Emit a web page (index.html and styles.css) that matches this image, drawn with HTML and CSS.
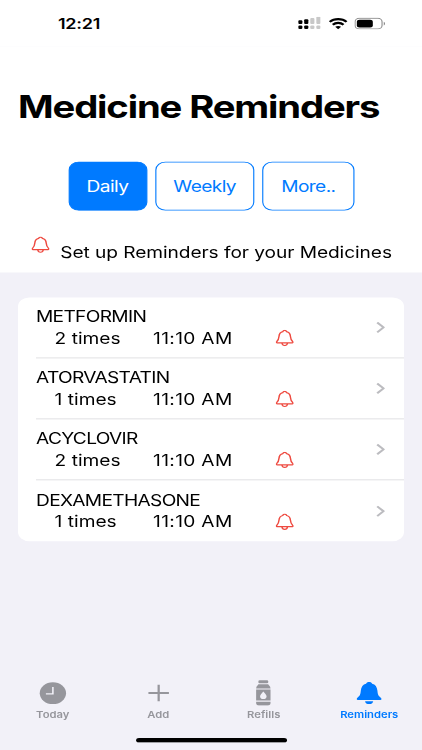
FILE: index.html
```
<!DOCTYPE html>
<html lang="en">
<head>
    <meta charset="UTF-8">
    <meta name="viewport" content="width=device-width, initial-scale=1.0">
    <title>Medicine Reminders</title>
    <link rel="stylesheet" href="styles.css">
</head>
<body>
    <svg class="symbols" width="0" height="0">
        <symbol id="bell" viewBox="0 0 16 18">
            <path d="M1.2 14.2C.3 14.2.4 13.2 1 12.7C2.5 11.2 2.7 10 2.9 7.3C3.1 4.3 4.3 2.6 6.3 2.1C6.5 1.2 7.1.7 8 .7C8.9.7 9.5 1.2 9.7 2.1C11.7 2.6 12.9 4.3 13.1 7.3C13.3 10 13.5 11.2 15 12.7C15.6 13.2 15.7 14.2 14.8 14.2Z"/>
            <path d="M5.6 14.4C5.7 16.2 6.7 17.1 8 17.1C9.3 17.1 10.3 16.2 10.4 14.4"/>
        </symbol>
    </svg>

    <div class="screen">
        <div class="status-bar">
            <span class="time">12:21</span>
            <div class="status-icons">
                <svg class="signal" width="20" height="14" viewBox="0 0 20 14">
                    <rect x="0" y="4" width="3.7" height="4" rx="1"/>
                    <rect x="5.3" y="2.8" width="3.7" height="5.2" rx="1"/>
                    <rect class="off" x="10.7" y="1.6" width="3.7" height="6.4" rx="1"/>
                    <rect class="off" x="16.1" y="0" width="3.7" height="8" rx="1"/>
                    <rect x="0" y="9.6" width="3.7" height="3.9" rx="1.2"/>
                    <rect x="5.3" y="9.6" width="3.7" height="3.9" rx="1.2"/>
                    <rect class="off" x="10.7" y="9.6" width="3.7" height="3.9" rx="1.2"/>
                    <rect class="off" x="16.1" y="9.6" width="3.7" height="3.9" rx="1.2"/>
                </svg>
                <svg class="wifi" width="17" height="13" viewBox="0 0 17 13">
                    <path d="M1 4.7C5 .7 12 .7 16 4.7" stroke-width="2.2"/>
                    <path d="M3.7 7.7C6.4 5.1 10.6 5.1 13.3 7.7" stroke-width="2.2"/>
                    <path class="dot" d="M5.9 10C7.4 8.8 9.6 8.8 11.1 10L8.5 12.8Z"/>
                </svg>
                <svg class="battery" width="28" height="13" viewBox="0 0 28 13">
                    <rect class="shell" x=".5" y=".7" width="24" height="11.6" rx="3.8"/>
                    <rect x="2.1" y="2.3" width="14.2" height="8.4" rx="2.4"/>
                    <path class="tip" d="M26 4.5C27.6 5.1 27.6 7.9 26 8.5Z"/>
                </svg>
            </div>
        </div>

        <header class="header">
            <h1>Medicine Reminders</h1>
            <div class="tabs">
                <button class="tab daily active">Daily</button>
                <button class="tab weekly">Weekly</button>
                <button class="tab more">More..</button>
            </div>
            <div class="hint">
                <svg class="bell"><use href="#bell"/></svg>
                <span>Set up Reminders for your Medicines</span>
            </div>
        </header>

        <main class="content">
            <ul class="list">
                <li class="row">
                    <div class="info">
                        <div class="name">METFORMIN</div>
                        <div class="details">
                            <span class="times">2 times</span>
                            <span class="at">11:10 AM</span>
                            <svg class="bell"><use href="#bell"/></svg>
                        </div>
                    </div>
                    <svg class="chevron" viewBox="0 0 8 13"><path d="M1.2 1.2L6.8 6.5L1.2 11.8"/></svg>
                </li>
                <li class="row">
                    <div class="info">
                        <div class="name">ATORVASTATIN</div>
                        <div class="details">
                            <span class="times">1 times</span>
                            <span class="at">11:10 AM</span>
                            <svg class="bell"><use href="#bell"/></svg>
                        </div>
                    </div>
                    <svg class="chevron" viewBox="0 0 8 13"><path d="M1.2 1.2L6.8 6.5L1.2 11.8"/></svg>
                </li>
                <li class="row">
                    <div class="info">
                        <div class="name">ACYCLOVIR</div>
                        <div class="details">
                            <span class="times">2 times</span>
                            <span class="at">11:10 AM</span>
                            <svg class="bell"><use href="#bell"/></svg>
                        </div>
                    </div>
                    <svg class="chevron" viewBox="0 0 8 13"><path d="M1.2 1.2L6.8 6.5L1.2 11.8"/></svg>
                </li>
                <li class="row">
                    <div class="info">
                        <div class="name">DEXAMETHASONE</div>
                        <div class="details">
                            <span class="times">1 times</span>
                            <span class="at">11:10 AM</span>
                            <svg class="bell"><use href="#bell"/></svg>
                        </div>
                    </div>
                    <svg class="chevron" viewBox="0 0 8 13"><path d="M1.2 1.2L6.8 6.5L1.2 11.8"/></svg>
                </li>
            </ul>
        </main>

        <nav class="nav">
            <a class="nav-item">
                <svg width="28" height="28" viewBox="0 0 28 28">
                    <ellipse cx="14" cy="14.5" rx="11.7" ry="11.8"/>
                    <path class="hands" d="M14 7.8V15.2H7.8"/>
                </svg>
                <span>Today</span>
            </a>
            <a class="nav-item">
                <svg width="28" height="28" viewBox="0 0 28 28">
                    <path class="plus" d="M14 5.3V23.3M4.9 14.3H23.1"/>
                </svg>
                <span>Add</span>
            </a>
            <a class="nav-item">
                <svg width="28" height="28" viewBox="0 0 28 28">
                    <rect x="9.6" y=".6" width="8.8" height="3.2" rx="1.2"/>
                    <path d="M9.6 4.9H18.4C18.5 6.3 20.3 6.6 20.4 9.4H7.6C7.7 6.6 9.5 6.3 9.6 4.9Z"/>
                    <path fill-rule="evenodd" d="M7.6 10.6H20.4V22.5H7.6ZM14 12.6C12.8 14.5 11.1 16 11.1 18.1C11.1 19.8 12.3 20.9 14 20.9C15.7 20.9 16.9 19.8 16.9 18.1C16.9 16 15.2 14.5 14 12.6Z"/>
                    <path d="M7.6 23.7H20.4V25C20.4 26.8 19.6 27.7 18 27.7H10C8.4 27.7 7.6 26.8 7.6 25Z"/>
                </svg>
                <span>Refills</span>
            </a>
            <a class="nav-item current">
                <svg width="28" height="28" viewBox="0 0 28 28">
                    <path d="M4 21.8C2.8 21.8 2.7 20.5 3.6 19.5C5.8 17.1 6.3 15.9 6.6 11.8C6.9 7.6 8.5 5 11.3 4.2C11.7 3.1 12.6 2.4 14 2.4C15.4 2.4 16.3 3.1 16.7 4.2C19.5 5 21.1 7.6 21.4 11.8C21.7 15.9 22.2 17.1 24.4 19.5C25.3 20.5 25.2 21.8 24 21.8Z"/>
                    <path d="M10.4 23.1H17.6C17.4 25 16 26.3 14 26.3C12 26.3 10.6 25 10.4 23.1Z"/>
                </svg>
                <span>Reminders</span>
            </a>
        </nav>
        <div class="home-indicator"></div>
    </div>
</body>
</html>
```
FILE: styles.css
```
:root {
    --blue: #007aff;
    --red: #ee4a40;
    --gray: #96969c;
    --bg: #f2f1f8;
    --line: #dedee1;
}

* {
    box-sizing: border-box;
}

html {
    height: 100%;
    overflow: hidden;
}

body {
    margin: 0;
    height: 750px;
    overflow: hidden;
    background-color: var(--bg);
    font-family: Inter, "Liberation Sans", sans-serif;
    color: #000;
}

.screen {
    display: flex;
    flex-direction: column;
    width: 375px;
    height: 812px;
    margin-bottom: -62px;
    transform: scale(1.12533, 0.92365);
    transform-origin: 0 0;
    font-size: 17px;
}

.symbols {
    display: block;
}

/* Status bar */
.status-bar {
    display: flex;
    justify-content: space-between;
    align-items: center;
    height: 50px;
    padding: 0 32px 0 51.5px;
    background-color: #fff;
}

.time {
    font-size: 16px;
    font-weight: 600;
    letter-spacing: -0.2px;
}

.status-icons {
    display: flex;
    align-items: center;
    gap: 6.5px;
}

.signal .off {
    fill: #c8c8c8;
}

.wifi path {
    fill: none;
    stroke: #000;
}

.wifi .dot {
    fill: #000;
    stroke: none;
}

.battery .shell {
    fill: none;
    stroke: #8c8c8c;
}

.battery .tip {
    fill: #8c8c8c;
}

/* Header */
.header {
    height: 244.5px;
    background-color: #fff;
}

h1 {
    margin: 0;
    padding: 45px 0 0 16px;
    font-size: 34px;
    line-height: 41px;
    font-weight: 700;
    letter-spacing: -1.02px;
    white-space: nowrap;
}

.tabs {
    display: flex;
    gap: 7.4px;
    margin: 38.5px 0 0 60.5px;
}

.tab {
    height: 53px;
    padding: 2px 0 0;
    border: 1px solid var(--blue);
    border-radius: 9px;
    background-color: #fff;
    color: var(--blue);
    font-family: inherit;
    font-size: 17px;
    letter-spacing: -0.52px;
}

.daily {
    width: 70px;
}

.weekly {
    width: 88px;
}

.more {
    width: 81.5px;
}

.tab.active {
    background-color: var(--blue);
    color: #fff;
}

.bell {
    width: 16px;
    height: 18px;
    fill: none;
    stroke: var(--red);
    stroke-width: 1.3;
}

.hint {
    display: flex;
    gap: 9.5px;
    padding: 28.3px 0 0 28px;
    white-space: nowrap;
}

.hint span {
    margin-top: 6.5px;
    line-height: 22px;
    letter-spacing: -0.06px;
}

/* Medicine list */
.content {
    flex: 1;
    padding: 27.7px 16px 0;
}

.list {
    margin: 0;
    padding: 0 0 0 16px;
    list-style: none;
    border-radius: 10px;
    background-color: #fff;
}

.row {
    display: flex;
    align-items: center;
    justify-content: space-between;
    height: 66px;
    padding-right: 17px;
    border-bottom: 1px solid var(--line);
}

.row:last-child {
    border-bottom: none;
}

.info {
    padding-top: 1px;
    line-height: 23px;
}

.name {
    letter-spacing: -0.6px;
}

.details {
    display: flex;
    padding-left: 16.5px;
}

.times {
    width: 87.5px;
}

.at {
    width: 108.5px;
    letter-spacing: 0.3px;
}

.details .bell {
    margin-top: 2px;
}

.chevron {
    width: 8px;
    height: 13px;
    fill: none;
    stroke: #bcbcc0;
    stroke-width: 2;
}

/* Bottom navigation */
.nav {
    display: flex;
    height: 63px;
}

.nav-item {
    flex: 1;
    display: flex;
    flex-direction: column;
    align-items: center;
    fill: var(--gray);
    color: var(--gray);
    font-size: 10px;
    font-weight: 600;
    line-height: 12px;
    letter-spacing: 0;
}

.nav-item svg {
    margin-bottom: 3px;
}

.nav-item.current {
    fill: var(--blue);
    color: var(--blue);
}

.hands {
    fill: none;
    stroke: var(--bg);
    stroke-width: 1.4;
}

.plus {
    stroke: var(--gray);
    stroke-width: 2;
}

.home-indicator {
    width: 134px;
    height: 5px;
    margin: 0 auto 8.5px;
    border-radius: 3px;
    background-color: #000;
}
```
